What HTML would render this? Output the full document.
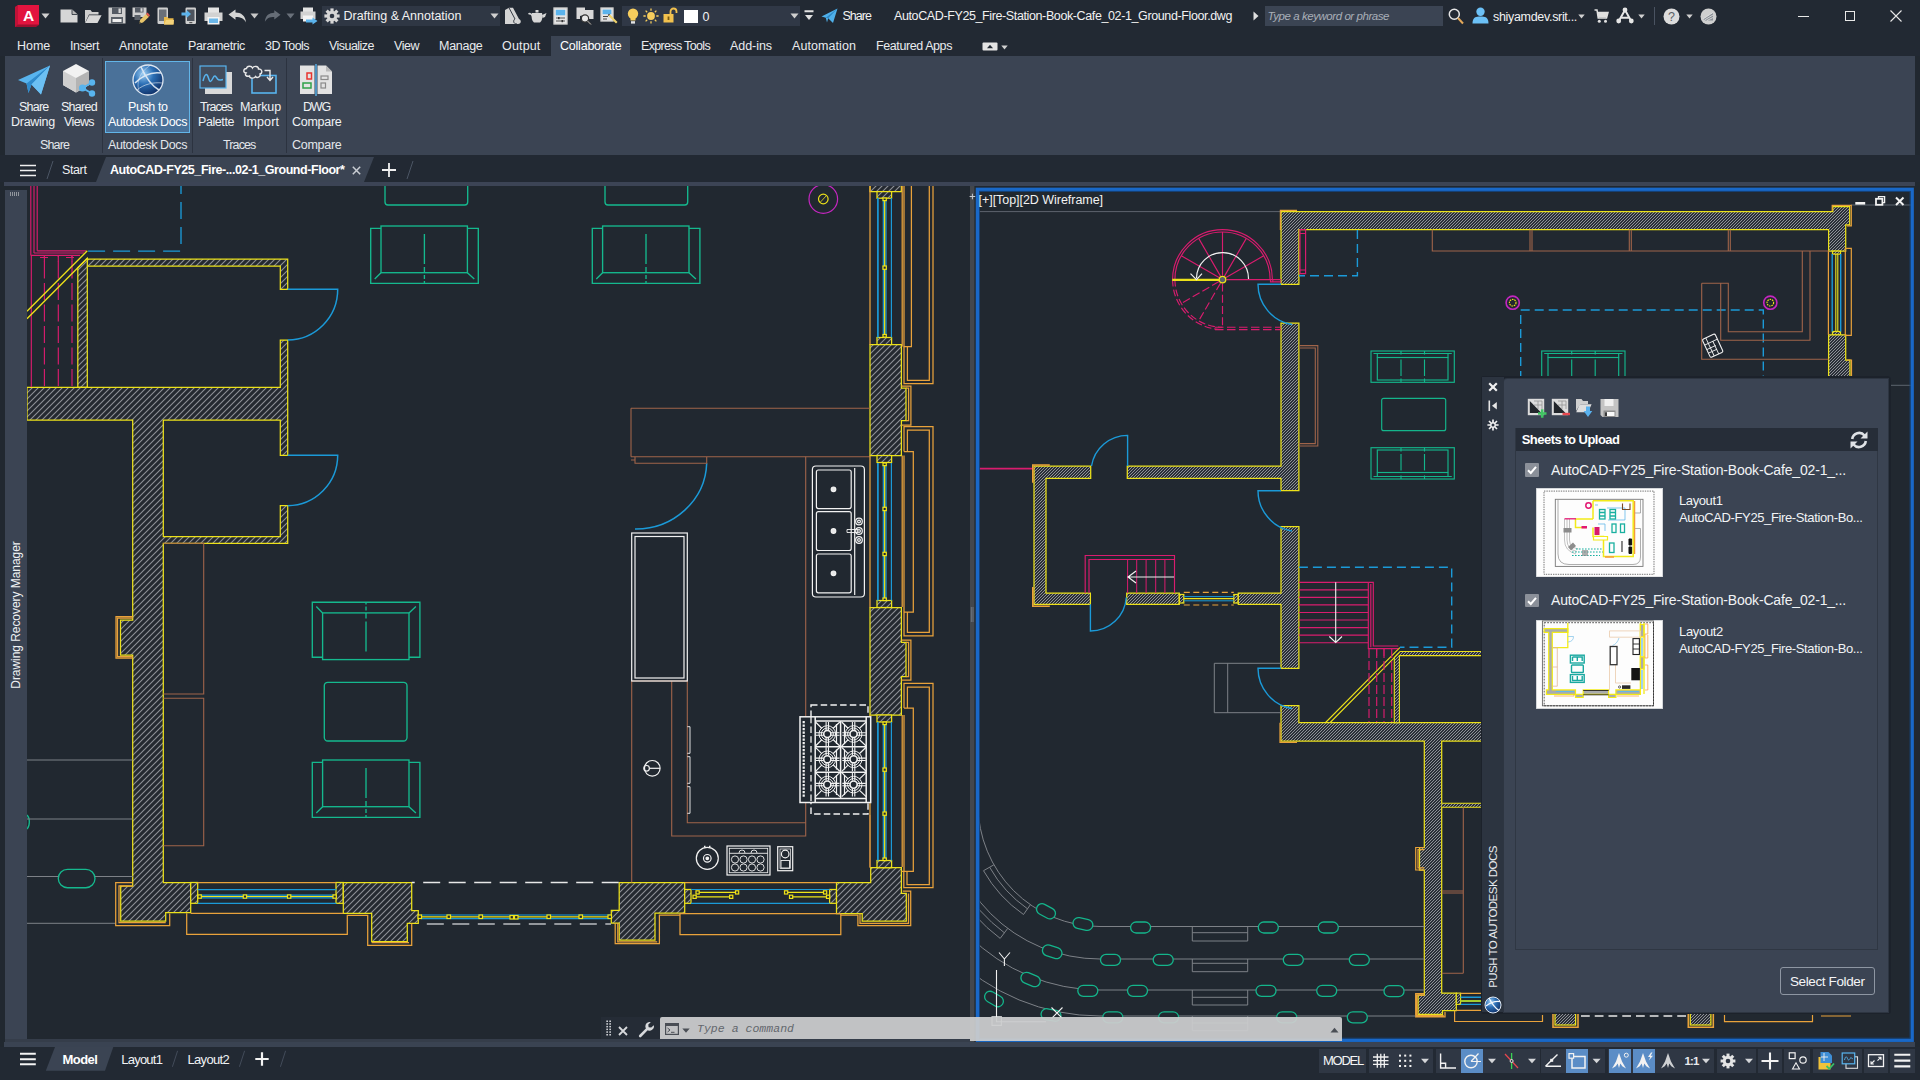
<!DOCTYPE html>
<html lang="en"><head><meta charset="utf-8"><title>AutoCAD - Push to Autodesk Docs</title>
<style>
*{box-sizing:border-box;margin:0;padding:0}
html,body{width:1920px;height:1080px;overflow:hidden;background:#212830;font-family:"Liberation Sans",sans-serif}
#app{position:relative;width:1920px;height:1080px;background:#212830;overflow:hidden}
.abs{position:absolute}
.t{position:absolute;white-space:pre;color:#fff}
svg{position:absolute;overflow:hidden}
.ico{position:absolute}
</style></head><body><div id="app">
<!-- ===== title bar ===== -->
<div class="abs" style="left:0;top:0;width:1920px;height:56px;background:#222933"></div>
<!-- A logo -->
<svg style="left:14px;top:4px" width="27" height="24" viewBox="0 0 27 24"><path d="M1 3 L4 1 L25 1 L25 21 L22 23 L1 23 Z" fill="#9c0f2f"/><rect x="4" y="1" width="21" height="19.5" fill="#e2143f"/><path d="M1 3 L4 1 L4 20.5 L1 23Z" fill="#c01237"/><text x="14.6" y="16.5" font-family="Liberation Sans, sans-serif" font-weight="700" font-size="15.5" fill="#fff" text-anchor="middle">A</text></svg>
<svg style="left:41px;top:13px" width="9" height="6"><path d="M0.5 0.5 L8.5 0.5 L4.5 5.5Z" fill="#d0d0d0"/></svg>
<!-- qat icons -->
<svg style="left:60px;top:9px" width="18" height="14" viewBox="0 0 18 14"><path d="M0.5 0.5 H12 L17.5 5.5 V13.5 H0.5Z" fill="#d6d6d6"/><path d="M12 0.5 V5.5 H17.5" fill="#b8b8b8" stroke="#222933" stroke-width="0.8"/></svg>
<svg style="left:84px;top:8px" width="18" height="16" viewBox="0 0 18 16"><path d="M1 15 V2 H6.5 L8 4 H14.5 V6.5 H5 L1 15Z" fill="#cfcfcf"/><path d="M5.2 7.2 H17.6 L13.5 15 H1.2Z" fill="#d8d8d8"/></svg>
<svg style="left:108px;top:7px" width="18" height="17" viewBox="0 0 18 17"><path d="M0.5 0.5 H17.5 V16.5 H0.5Z" fill="#d0d0d0"/><rect x="4" y="0.5" width="10" height="6.5" fill="#555b64"/><rect x="10.5" y="1.5" width="2.3" height="4.5" fill="#d8d8d8"/><rect x="3" y="10" width="12" height="6.5" fill="#5a6068"/><rect x="4.5" y="12" width="9" height="3" fill="#f0f0f0"/></svg>
<svg style="left:132px;top:7px" width="18" height="17" viewBox="0 0 18 17"><path d="M0.5 0.5 H14.5 V10 H0.5Z" fill="#cfcfcf"/><rect x="3" y="0.5" width="8.5" height="5" fill="#555b64"/><rect x="8.5" y="1.2" width="2" height="3.5" fill="#d8d8d8"/><rect x="2.5" y="8" width="6" height="5" fill="#5a6068"/><path d="M7 16.5 L8.2 12.8 L14 7 L17 9.8 L11 15.6Z" fill="#e8c56a"/><path d="M14 7 L15.5 5.6 L18 8.2 L17 9.8Z" fill="#e2574c"/><path d="M7 16.5 L7.6 14.6 L9 16Z" fill="#333"/></svg>
<svg style="left:157px;top:7px" width="17" height="18" viewBox="0 0 17 18"><rect x="0.5" y="0.5" width="10.5" height="16.5" rx="1.2" fill="#cfcfcf"/><rect x="2" y="2.5" width="7.5" height="11.5" fill="#6a7078"/><path d="M7 17.5 V10 H10.5 L11.5 11.3 H16.5 V17.5Z" fill="#e9b94a"/><path d="M7 17.5 L9 13 H17 L16.5 17.5Z" fill="#f3d27a"/></svg>
<svg style="left:181px;top:7px" width="16" height="18" viewBox="0 0 16 18"><rect x="4.5" y="0.5" width="10.5" height="16.5" rx="1.2" fill="#cfcfcf"/><rect x="6" y="2.5" width="7.5" height="11.5" fill="#4d545e"/><rect x="8.3" y="15" width="3" height="1.2" fill="#555"/><path d="M0.5 5.5 H5.5 V3 L10 7 L5.5 11 V8.5 H0.5Z" fill="#5bb3ec"/></svg>
<svg style="left:204px;top:7px" width="19" height="18" viewBox="0 0 19 18"><rect x="4" y="0.5" width="11" height="6" fill="#e4e4e4"/><path d="M0.5 5.5 H18.5 V14 H0.5Z" fill="#d2d2d2"/><rect x="3.5" y="10" width="12" height="7.5" fill="#f4f4f4"/><rect x="5" y="11.5" width="9" height="4.5" fill="#6cb8ea"/></svg>
<svg style="left:228px;top:9px" width="19" height="14" viewBox="0 0 19 14"><path d="M0.5 5.5 L7.5 0.5 V3.5 C13 3.5 17.5 6.5 18 13.5 C16 9.5 13 8 7.5 8 V10.8Z" fill="#d4d4d4"/></svg>
<svg style="left:250px;top:13px" width="9" height="6"><path d="M0.5 0.5 L8.5 0.5 L4.5 5.5Z" fill="#c8c8c8"/></svg>
<svg style="left:264px;top:9px" width="17" height="14" viewBox="0 0 19 14"><path d="M18.5 5.5 L11.5 0.5 V3.5 C6 3.5 1.5 6.5 1 13.5 C3 9.5 6 8 11.5 8 V10.8Z" fill="#666d77"/></svg>
<svg style="left:286px;top:13px" width="9" height="6"><path d="M0.5 0.5 L8.5 0.5 L4.5 5.5Z" fill="#6a717b"/></svg>
<svg style="left:300px;top:7px" width="18" height="18" viewBox="0 0 18 18"><rect x="3" y="0.5" width="10" height="5" fill="#e4e4e4"/><path d="M0.5 4.5 H15.5 V12 H0.5Z" fill="#d2d2d2"/><rect x="3" y="8.5" width="10" height="6" fill="#f4f4f4"/><path d="M6 12.5 H12.5 V10.5 L17.5 14 L12.5 17.5 V15.5 H6Z" fill="#5bb3ec"/></svg>
<!-- workspace box -->
<div class="abs" style="left:322px;top:6px;width:178px;height:20px;background:#2f3744"></div>
<svg style="left:324px;top:8px" width="16" height="16" viewBox="-8 -8 16 16"><g fill="#d6d6d6"><circle r="5.2"/><g id="gt"><rect x="-1.6" y="-7.6" width="3.2" height="15.2"/></g><use href="#gt" transform="rotate(45)"/><use href="#gt" transform="rotate(90)"/><use href="#gt" transform="rotate(135)"/></g><circle r="2.3" fill="#2f3744"/></svg>
<span class="t" style="left:343.5px;top:7px;font:normal 400 12.5px/18px 'Liberation Sans', sans-serif;color:#f2f2f2;letter-spacing:-0.007px;">Drafting &amp; Annotation</span>
<svg style="left:490px;top:13px" width="9" height="6"><path d="M0.5 0.5 L8.5 0.5 L4.5 5.5Z" fill="#d0d0d0"/></svg>
<!-- misc icons after workspace -->
<svg style="left:504px;top:7px" width="18" height="18" viewBox="0 0 18 18"><path d="M1 17 V3 L5 0.8 H9 L15 12 C17.5 13 17.5 17 14 17Z" fill="#d4d4d4"/><path d="M5 0.8 L11 12 C9 13 9 17 13 17" fill="none" stroke="#222933" stroke-width="0.9"/></svg>
<svg style="left:528px;top:9px" width="19" height="14" viewBox="0 0 19 14"><path d="M4 4 H14 C15 8 14 12 12 13.5 H6 C4 12 3 8 4 4Z" fill="#d6d6d6"/><path d="M0.5 5 C2 4 4 5.5 5 8" stroke="#d6d6d6" stroke-width="1.6" fill="none"/><path d="M14 6 L18.5 4 L17 8 L14.5 9Z" fill="#d6d6d6"/><rect x="7.5" y="1" width="3" height="2.5" fill="#d6d6d6"/></svg>
<svg style="left:553px;top:7px" width="15" height="18" viewBox="0 0 15 18"><rect x="0.8" y="0.8" width="13.4" height="16.4" fill="#e6e6e6" stroke="#bdbdbd"/><rect x="2.8" y="2.8" width="9.4" height="5.5" fill="#5bb3ec"/><path d="M3 11 H12 M3 14 H12" stroke="#555" stroke-width="1.2"/><rect x="5" y="10" width="1.6" height="2.2" fill="#333"/><rect x="8.5" y="13" width="1.6" height="2.2" fill="#333"/></svg>
<svg style="left:576px;top:7px" width="18" height="18" viewBox="0 0 18 18"><path d="M0.5 0.5 H9 V3 H17.5 V12 H11 L8 8 L4 9 V12 H0.5Z" fill="#d8d8d8"/><circle cx="9" cy="11.5" r="3.6" fill="#e8e8e8" stroke="#333" stroke-width="1.2"/><path d="M11.5 14 L15 17.5" stroke="#333" stroke-width="2"/><path d="M11.5 14 L15 17.5" stroke="#ddd" stroke-width="0.8"/></svg>
<svg style="left:600px;top:7px" width="18" height="18" viewBox="0 0 18 18"><rect x="0.8" y="0.8" width="12.4" height="13.4" fill="#e6e6e6" stroke="#bdbdbd"/><rect x="2.6" y="2.6" width="8.8" height="4.6" fill="#5bb3ec"/><path d="M3 9.5 H8 M3 12 H7" stroke="#444" stroke-width="1.2"/><path d="M8.5 9 L13 13.5 L16 16.5 L17.5 15 L14.5 12 L10 7.5Z" fill="#f0d36b"/><path d="M8.5 9 L10 7.5 L9 6.8 L7.8 8Z" fill="#444"/></svg>
<!-- layer box -->
<div class="abs" style="left:622px;top:6px;width:178px;height:20px;background:#303846"></div>
<svg style="left:627px;top:8px" width="12" height="17" viewBox="0 0 12 17"><circle cx="6" cy="5.8" r="5.2" fill="#f6cd5d"/><path d="M3.5 9 H8.5 V12.5 H3.5Z" fill="#f6cd5d"/><rect x="4" y="13.2" width="4" height="2.4" fill="#e4e4e4"/></svg>
<svg style="left:643px;top:8px" width="16" height="16" viewBox="-8 -8 16 16"><circle r="3.9" fill="#f6cd5d"/><g stroke="#f6cd5d" stroke-width="1.3"><path d="M0 -7.6 V-5.3 M0 7.6 V5.3 M-7.6 0 H-5.3 M7.6 0 H5.3 M-5.4 -5.4 L-3.8 -3.8 M5.4 5.4 L3.8 3.8 M-5.4 5.4 L-3.8 3.8 M5.4 -5.4 L3.8 -3.8"/></g></svg>
<svg style="left:663px;top:7px" width="15" height="17" viewBox="0 0 15 17"><path d="M7.5 7 V4.5 A3 3 0 0 1 13.5 4.5 V6" fill="none" stroke="#f2c14e" stroke-width="1.8"/><rect x="0.5" y="7" width="10" height="8.5" fill="#f2c14e"/><rect x="4.6" y="9.5" width="1.8" height="3.5" fill="#7a5a10"/></svg>
<div class="abs" style="left:684px;top:9.5px;width:14px;height:13.5px;background:#fff"></div>
<span class="t" style="left:702.5px;top:7.5px;font:normal 400 12.5px/18px 'Liberation Sans', sans-serif;color:#f2f2f2;">0</span>
<svg style="left:790px;top:13px" width="9" height="6"><path d="M0.5 0.5 L8.5 0.5 L4.5 5.5Z" fill="#d0d0d0"/></svg>
<svg style="left:804px;top:10px" width="10" height="11"><path d="M0.5 1 H9.5 M0.5 1.5 H9.5" stroke="#e0e0e0" stroke-width="1.6"/><path d="M1 5 L9 5 L5 10Z" fill="#e0e0e0"/></svg>
<svg style="left:821px;top:8px" width="17" height="16" viewBox="0 0 17 16"><path d="M0.5 8.5 L16.5 0.5 L12 15 L7.2 10.2 L6 14.5 L4.8 9.8Z" fill="#4fb0ea"/><path d="M4.8 9.8 L16.5 0.5 L7.2 10.2" fill="#2b86c5"/></svg>
<span class="t" style="left:842.5px;top:7px;font:normal 400 12.5px/18px 'Liberation Sans', sans-serif;color:#f2f2f2;letter-spacing:-0.972px;">Share</span>
<span class="t" style="left:894px;top:7px;font:normal 400 12.5px/18px 'Liberation Sans', sans-serif;color:#f2f2f2;letter-spacing:-0.384px;">AutoCAD-FY25_Fire-Station-Book-Cafe_02-1_Ground-Floor.dwg</span>
<svg style="left:1253px;top:11px" width="6" height="10"><path d="M0.5 0.5 L5.5 5 L0.5 9.5Z" fill="#e0e0e0"/></svg>
<div class="abs" style="left:1265px;top:6px;width:178px;height:20px;background:#3b4453"></div>
<span class="t" style="left:1267.5px;top:8px;font:italic 400 11.5px/16px 'Liberation Sans', sans-serif;color:#a9afb8;letter-spacing:-0.442px;">Type a keyword or phrase</span>
<svg style="left:1448px;top:8px" width="16" height="17" viewBox="0 0 16 17"><circle cx="6.3" cy="6.3" r="5" fill="none" stroke="#e6e6e6" stroke-width="1.5"/><path d="M10 10 L15 15.5" stroke="#e3a85a" stroke-width="2"/></svg>
<svg style="left:1472px;top:7px" width="17" height="17" viewBox="0 0 17 17"><circle cx="8.5" cy="4.8" r="4.2" fill="#6cc1f7"/><path d="M0.5 16.5 C0.5 10 4 9.5 8.5 9.5 S16.5 10 16.5 16.5Z" fill="#6cc1f7"/></svg>
<span class="t" style="left:1493px;top:7.5px;font:normal 400 12.5px/18px 'Liberation Sans', sans-serif;color:#f2f2f2;letter-spacing:-0.316px;">shiyamdev.srit...</span>
<svg style="left:1578px;top:14px" width="7" height="5"><path d="M0.3 0.5 L6.7 0.5 L3.5 4.5Z" fill="#d0d0d0"/></svg>
<svg style="left:1594px;top:9px" width="15" height="15" viewBox="0 0 15 15"><path d="M0.5 1 H3 L4.2 9 H12.5 L14 3.5 H3.6" fill="none" stroke="#e0e0e0" stroke-width="1.5"/><rect x="4" y="4" width="9" height="4.5" fill="#e0e0e0"/><circle cx="5.3" cy="12.3" r="1.5" fill="#e0e0e0"/><circle cx="11.5" cy="12.3" r="1.5" fill="#e0e0e0"/></svg>
<svg style="left:1616px;top:7px" width="18" height="17" viewBox="0 0 18 17"><path d="M9 3 L2.8 14 M9 3 L15.2 14 M5 10.8 H13" fill="none" stroke="#e6e6e6" stroke-width="2"/><circle cx="9" cy="3" r="2.4" fill="#e6e6e6"/><circle cx="2.7" cy="14" r="2.4" fill="#e6e6e6"/><circle cx="15.3" cy="14" r="2.4" fill="#e6e6e6"/></svg>
<svg style="left:1638px;top:14px" width="7" height="5"><path d="M0.3 0.5 L6.7 0.5 L3.5 4.5Z" fill="#d0d0d0"/></svg>
<div class="abs" style="left:1654px;top:7px;width:1px;height:18px;background:#4a5361"></div>
<svg style="left:1663px;top:8px" width="17" height="17" viewBox="0 0 17 17"><circle cx="8.5" cy="8.5" r="8" fill="#dcdcdc"/><text x="8.5" y="13" font-family="Liberation Sans, sans-serif" font-size="12.5" text-anchor="middle" fill="#5a5f66">?</text></svg>
<svg style="left:1686px;top:14px" width="7" height="5"><path d="M0.3 0.5 L6.7 0.5 L3.5 4.5Z" fill="#d0d0d0"/></svg>
<svg style="left:1700px;top:8px" width="17" height="17" viewBox="0 0 17 17"><circle cx="8.5" cy="8.5" r="8" fill="#cfcfcf"/><path d="M3 11 L13 4.5 V12.5 H5Z" fill="#8a8f96"/><path d="M3 11 L13 4.5 M4.5 12 L13 7 M7 12.5 L13 9.5" stroke="#e8e8e8" stroke-width="0.8"/></svg>
<!-- window controls -->
<div class="abs" style="left:1798px;top:15.5px;width:11px;height:1px;background:#e8e8e8"></div>
<div class="abs" style="left:1845px;top:11px;width:10px;height:10px;border:1px solid #e8e8e8"></div>
<svg style="left:1890px;top:10px" width="12" height="12"><path d="M0.5 0.5 L11.5 11.5 M11.5 0.5 L0.5 11.5" stroke="#e8e8e8" stroke-width="1.1"/></svg>

<!-- ===== menu tabs ===== -->
<div class="abs" style="left:551px;top:36px;width:79px;height:21px;background:#3b4453"></div>
<span class="t" style="left:17px;top:37px;font:normal 400 12.5px/18px 'Liberation Sans', sans-serif;color:#e9ebee;letter-spacing:-0.011px;">Home</span>
<span class="t" style="left:70px;top:37px;font:normal 400 12.5px/18px 'Liberation Sans', sans-serif;color:#e9ebee;letter-spacing:-0.378px;">Insert</span>
<span class="t" style="left:119px;top:37px;font:normal 400 12.5px/18px 'Liberation Sans', sans-serif;color:#e9ebee;letter-spacing:-0.131px;">Annotate</span>
<span class="t" style="left:188px;top:37px;font:normal 400 12.5px/18px 'Liberation Sans', sans-serif;color:#e9ebee;letter-spacing:-0.344px;">Parametric</span>
<span class="t" style="left:265px;top:37px;font:normal 400 12.5px/18px 'Liberation Sans', sans-serif;color:#e9ebee;letter-spacing:-0.553px;">3D Tools</span>
<span class="t" style="left:329px;top:37px;font:normal 400 12.5px/18px 'Liberation Sans', sans-serif;color:#e9ebee;letter-spacing:-0.535px;">Visualize</span>
<span class="t" style="left:394px;top:37px;font:normal 400 12.5px/18px 'Liberation Sans', sans-serif;color:#e9ebee;letter-spacing:-0.469px;">View</span>
<span class="t" style="left:439px;top:37px;font:normal 400 12.5px/18px 'Liberation Sans', sans-serif;color:#e9ebee;letter-spacing:-0.281px;">Manage</span>
<span class="t" style="left:502px;top:37px;font:normal 400 12.5px/18px 'Liberation Sans', sans-serif;color:#e9ebee;letter-spacing:0.161px;">Output</span>
<span class="t" style="left:560px;top:37px;font:normal 400 12.5px/18px 'Liberation Sans', sans-serif;color:#ffffff;letter-spacing:-0.222px;">Collaborate</span>
<span class="t" style="left:641px;top:37px;font:normal 400 12.5px/18px 'Liberation Sans', sans-serif;color:#e9ebee;letter-spacing:-0.661px;">Express Tools</span>
<span class="t" style="left:730px;top:37px;font:normal 400 12.5px/18px 'Liberation Sans', sans-serif;color:#e9ebee;letter-spacing:-0.056px;">Add-ins</span>
<span class="t" style="left:792px;top:37px;font:normal 400 12.5px/18px 'Liberation Sans', sans-serif;color:#e9ebee;letter-spacing:0.077px;">Automation</span>
<span class="t" style="left:876px;top:37px;font:normal 400 12.5px/18px 'Liberation Sans', sans-serif;color:#e9ebee;letter-spacing:-0.409px;">Featured Apps</span>
<svg style="left:982px;top:42px" width="16" height="9"><rect x="0.5" y="0.5" width="15" height="8" rx="1" fill="#e4e4e4"/><path d="M5 6.3 L8 2.8 L11 6.3Z" fill="#222933"/></svg>
<svg style="left:1001px;top:45px" width="7" height="5"><path d="M0.3 0.5 L6.7 0.5 L3.5 4.5Z" fill="#d0d0d0"/></svg>

<!-- ===== ribbon ===== -->
<div class="abs" style="left:5px;top:56px;width:1910px;height:99px;background:#3b4453"></div>
<div class="abs" style="left:102px;top:58px;width:1px;height:95px;background:#2c3340"></div>
<div class="abs" style="left:192px;top:58px;width:1px;height:95px;background:#2c3340"></div>
<div class="abs" style="left:286px;top:58px;width:1px;height:95px;background:#2c3340"></div>
<div class="abs" style="left:105px;top:61px;width:85px;height:72px;background:#4a7199;border:1px solid #62b5e8"></div>
<!-- share drawing -->
<svg style="left:17px;top:64px" width="34" height="32" viewBox="0 0 34 32"><path d="M1 16 L33 1.5 L24 30.5 L14.5 20.5 L11.5 29 L9.5 19.5Z" fill="#58b4ee"/><path d="M9.5 19.5 L33 1.5 L14.5 20.5 L11.5 29Z" fill="#2f8bcc"/><path d="M14.5 20.5 L33 1.5 L24 30.5Z" fill="#6cc0f3"/></svg>
<span class="t" style="left:19px;top:98px;font:normal 400 12.5px/18px 'Liberation Sans', sans-serif;color:#f0f2f4;letter-spacing:-0.772px;">Share</span>
<span class="t" style="left:11px;top:113px;font:normal 400 12.5px/18px 'Liberation Sans', sans-serif;color:#f0f2f4;letter-spacing:-0.266px;">Drawing</span>
<!-- shared views -->
<svg style="left:61px;top:63px" width="36" height="34" viewBox="0 0 36 34"><path d="M2 8 L15 1 L28 8 V22 L15 29.5 L2 22Z" fill="#f2f2f2"/><path d="M2 8 L15 15 V29.5 L2 22Z" fill="#cfcfcf"/><path d="M15 15 L28 8 V22 L15 29.5Z" fill="#b4b4b4"/><g stroke="#58b4ee" stroke-width="2"><path d="M21.5 25 L31 19.5 M21.5 25 L31 30.5"/></g><circle cx="21.5" cy="25" r="3.6" fill="#58b4ee"/><circle cx="31" cy="19.5" r="3.2" fill="#58b4ee"/><circle cx="31" cy="30.5" r="3.2" fill="#58b4ee"/></svg>
<span class="t" style="left:61px;top:98px;font:normal 400 12.5px/18px 'Liberation Sans', sans-serif;color:#f0f2f4;letter-spacing:-0.719px;">Shared</span>
<span class="t" style="left:64px;top:113px;font:normal 400 12.5px/18px 'Liberation Sans', sans-serif;color:#f0f2f4;letter-spacing:-0.625px;">Views</span>
<!-- push to autodesk docs -->
<svg style="left:132px;top:64px" width="32" height="32" viewBox="-16 -16 32 32"><defs><radialGradient id="gl" cx="35%" cy="30%" r="75%"><stop offset="0" stop-color="#9fd0f5"/><stop offset="0.45" stop-color="#2c6fb5"/><stop offset="1" stop-color="#0f2f66"/></radialGradient></defs><circle r="15" fill="url(#gl)" stroke="#dfe8f2" stroke-width="1.3"/><g fill="none" stroke="#e6eef7" stroke-width="1.6" opacity="0.9"><path d="M-13 3 C-4 -6 6 -8 13 -7"/><path d="M-7 -13 C-2 -2 4 6 11 10"/><path d="M-11 10 C-4 4 6 2 14 3" stroke-width="1" opacity="0.7"/><path d="M2 -14.5 C-8 -8 -12 2 -9 11" stroke-width="0.9" opacity="0.6"/></g></svg>
<span class="t" style="left:128px;top:98px;font:normal 400 12.5px/18px 'Liberation Sans', sans-serif;color:#ffffff;letter-spacing:-0.413px;">Push to</span>
<span class="t" style="left:108px;top:113px;font:normal 400 12.5px/18px 'Liberation Sans', sans-serif;color:#ffffff;letter-spacing:-0.391px;">Autodesk Docs</span>
<!-- traces palette -->
<svg style="left:199px;top:65px" width="34" height="30" viewBox="0 0 34 30"><rect x="6" y="7" width="27" height="22" fill="#d9d9d9"/><rect x="1" y="1" width="26" height="22" fill="#424d5d" stroke="#58b4ee" stroke-width="1.2"/><path d="M4 16 C6 8 8 8 9.5 13 S12 17 14 13 S17 12 18.5 14 S22 15 24 14.5" fill="none" stroke="#58b4ee" stroke-width="1.5"/></svg>
<span class="t" style="left:200px;top:98px;font:normal 400 12.5px/18px 'Liberation Sans', sans-serif;color:#f0f2f4;letter-spacing:-0.958px;">Traces</span>
<span class="t" style="left:198px;top:113px;font:normal 400 12.5px/18px 'Liberation Sans', sans-serif;color:#f0f2f4;letter-spacing:-0.417px;">Palette</span>
<!-- markup import -->
<svg style="left:243px;top:65px" width="34" height="30" viewBox="0 0 34 30"><rect x="9" y="10.5" width="24" height="17.5" fill="none" stroke="#58b4ee" stroke-width="1.6"/><path d="M3 8 C0 8 0 3.5 3.5 3.5 C4 0.5 8.5 0.5 9.5 3 C11 0.5 15.5 1 15.5 4 C19 3.5 20 8 17 9 C18 12 14 13.5 12.5 11.5 C11 14 6.5 13.5 6.5 11 C3.5 12 1.5 10 3 8Z" fill="#3b4453" stroke="#e9e9e9" stroke-width="1.4"/><path d="M21.5 5.5 H27 V15 M24 12 L27 15.5 L30 12" fill="none" stroke="#e9e9e9" stroke-width="1.4"/></svg>
<span class="t" style="left:240px;top:98px;font:normal 400 12.5px/18px 'Liberation Sans', sans-serif;color:#f0f2f4;letter-spacing:-0.115px;">Markup</span>
<span class="t" style="left:243px;top:113px;font:normal 400 12.5px/18px 'Liberation Sans', sans-serif;color:#f0f2f4;letter-spacing:0.094px;">Import</span>
<!-- dwg compare -->
<svg style="left:299px;top:64px" width="34" height="32" viewBox="0 0 34 32"><path d="M1 1.5 H15.5 V30 H1Z" fill="#e3e3e3"/><path d="M18.5 1.5 H27 L33 7.5 V30 H18.5Z" fill="#e3e3e3"/><path d="M27 1.5 V7.5 H33Z" fill="#b9b9b9"/><path d="M17 0 V32" stroke="#58b4ee" stroke-width="1.4"/><rect x="8" y="9" width="4.5" height="6" fill="none" stroke="#e8342f" stroke-width="1.5"/><rect x="4" y="19" width="8" height="5" fill="none" stroke="#2fa14a" stroke-width="1.5"/><rect x="22" y="12" width="7" height="3.5" fill="none" stroke="#8a8a8a" stroke-width="1.2"/><rect x="22" y="19" width="4.5" height="5" fill="none" stroke="#8a8a8a" stroke-width="1.2"/></svg>
<span class="t" style="left:303px;top:98px;font:normal 400 12.5px/18px 'Liberation Sans', sans-serif;color:#f0f2f4;letter-spacing:-1.188px;">DWG</span>
<span class="t" style="left:292px;top:113px;font:normal 400 12.5px/18px 'Liberation Sans', sans-serif;color:#f0f2f4;letter-spacing:-0.275px;">Compare</span>
<!-- panel titles -->
<span class="t" style="left:40px;top:136px;font:normal 400 12.5px/18px 'Liberation Sans', sans-serif;color:#e4e7eb;letter-spacing:-0.872px;">Share</span>
<span class="t" style="left:108px;top:136px;font:normal 400 12.5px/18px 'Liberation Sans', sans-serif;color:#e4e7eb;letter-spacing:-0.391px;">Autodesk Docs</span>
<span class="t" style="left:223px;top:136px;font:normal 400 12.5px/18px 'Liberation Sans', sans-serif;color:#e4e7eb;letter-spacing:-0.875px;">Traces</span>
<span class="t" style="left:292px;top:136px;font:normal 400 12.5px/18px 'Liberation Sans', sans-serif;color:#e4e7eb;letter-spacing:-0.275px;">Compare</span>

<!-- ===== file tabs ===== -->
<div class="abs" style="left:0;top:155px;width:1920px;height:27px;background:#222933"></div>
<div class="abs" style="left:4px;top:182px;width:1911px;height:4.1px;background:#3c4455"></div>
<svg style="left:96px;top:157px" width="280" height="25"><path d="M0 25 L10 0 H278 L268 25Z" fill="#3b4453"/></svg>
<svg style="left:20px;top:164px" width="16" height="13"><path d="M0 1.5 H16 M0 6.5 H16 M0 11.5 H16" stroke="#f0f0f0" stroke-width="1.7"/></svg>
<svg style="left:45px;top:160px" width="10" height="20"><path d="M8 1 L2 19" stroke="#4b5564" stroke-width="1"/></svg>
<span class="t" style="left:62px;top:161px;font:normal 400 12.5px/18px 'Liberation Sans', sans-serif;color:#eef0f2;letter-spacing:-0.381px;">Start</span>
<span class="t" style="left:110px;top:161px;font:normal 700 12.5px/18px 'Liberation Sans', sans-serif;color:#ffffff;letter-spacing:-0.434px;">AutoCAD-FY25_Fire-...02-1_Ground-Floor*</span>
<svg style="left:352px;top:166px" width="9" height="9"><path d="M0.8 0.8 L8.2 8.2 M8.2 0.8 L0.8 8.2" stroke="#c9cdd3" stroke-width="1.5"/></svg>
<svg style="left:382px;top:163px" width="14" height="14"><path d="M7 0 V14 M0 7 H14" stroke="#f0f0f0" stroke-width="1.8"/></svg>
<svg style="left:405px;top:160px" width="10" height="20"><path d="M8 1 L2 19" stroke="#4b5564" stroke-width="1"/></svg>

<!-- ===== left palette strip ===== -->
<div class="abs" style="left:5px;top:190px;width:22px;height:850px;background:#3b4453"></div>
<svg style="left:9px;top:192px" width="12" height="5"><g fill="#e8e8e8"><rect x="1" y="0.5" width="1" height="1"/><rect x="3" y="0.5" width="1" height="1"/><rect x="5" y="0.5" width="1" height="1"/><rect x="7" y="0.5" width="1" height="1"/><rect x="9" y="0.5" width="1" height="1"/><rect x="1" y="2.5" width="1" height="1"/><rect x="3" y="2.5" width="1" height="1"/><rect x="5" y="2.5" width="1" height="1"/><rect x="7" y="2.5" width="1" height="1"/><rect x="9" y="2.5" width="1" height="1"/></g></svg>
<div class="abs" style="left:16px;top:615px;width:0;height:0"><span id="drm" style="position:absolute;white-space:pre;font:400 12px/16px 'Liberation Sans',sans-serif;color:#f0f2f4;transform:translate(-50%,-50%) rotate(-90deg);letter-spacing:-0.055px">Drawing Recovery Manager</span></div>
<!-- ===== LEFT VIEWPORT ===== -->
<svg style="left:0;top:0" width="1920" height="1080" viewBox="0 0 1920 1080">
<defs>
<pattern id="hA" patternUnits="userSpaceOnUse" width="6" height="6"><rect width="6" height="6" fill="#242930"/><path d="M-1.5 1.5 L1.5 -1.5 M-0.5 6.5 L6.5 -0.5 M4.5 7.5 L7.5 4.5" stroke="#8d9096" stroke-width="1.1"/></pattern>
<pattern id="hB" patternUnits="userSpaceOnUse" width="3" height="3"><rect width="3" height="3" fill="#2a2f37"/><path d="M-1 1 L1 -1 M-0.5 3.5 L3.5 -0.5 M2 4 L4 2" stroke="#95989d" stroke-width="0.95"/></pattern>
<clipPath id="cl"><rect x="27" y="186.1" width="943" height="854"/></clipPath>
<g id="sofaL" fill="none" stroke="#15b98e" stroke-width="1.35"><path d="M10.3 2.3 H0 V57.3 H107.6 V2.3 H96.7"/><rect x="10.3" y="0" width="86.4" height="46.7"/><path d="M10.3 46.7 L4 53 M96.7 46.7 L103.6 53 M53.7 8 V38 M53.7 41 V46.7 M53.7 49 V53 M53.7 55 V57.3"/></g>
</defs>
<g clip-path="url(#cl)" fill="none" stroke-linecap="butt">
<!-- hatch fills -->
<g fill="url(#hA)" stroke="#ece11a" stroke-width="1.25" stroke-linejoin="miter">
<path d="M87.3 259 H287.7 V289.3 H280.3 V266 H87.3Z"/>
<path d="M77.8 267.8 L87.3 258.3 V387.3 H77.8Z" />
<path d="M280.3 340 H287.7 V455.3 H280.3 V420 H163.3 V536.7 H280.3 V505.7 H287.7 V543.3 H163.3 V882.5 H190.7 V912.7 H165.7 V921 H120.7 V886 H132.7 V655 H120.5 V620 H132.7 V420 H27 V387.3 H280.3Z"/>
<rect x="190.7" y="882.5" width="7" height="20.8"/>
<rect x="336" y="882.5" width="7.3" height="20.8"/>
<path d="M343.3 882.5 H411.7 V910.7 H418.3 V923.3 H407.3 V941.7 H371.7 V913.3 H343.3Z"/>
<path d="M619.2 882.5 H684.7 V913.2 H655 V940 H619.2 V923 H611.3 V910.3 H619.2Z"/>
<rect x="684.7" y="889.5" width="6.3" height="13.8"/>
<rect x="829.6" y="889.5" width="6.9" height="13.8"/>
<path d="M836.5 882.5 H870.7 V867.7 H901.4 V893.4 H906.3 V921.1 H862.2 V913.6 H836.5Z"/>
<path d="M870 185 H901.4 V191.6 H870Z"/>
<rect x="877" y="191.6" width="14.6" height="6.6"/><rect x="877" y="337.5" width="14.6" height="7.2"/>
<path d="M870 344.7 H901.4 V388.2 H906 V420.7 H901.4 V455.5 H870Z"/>
<rect x="877" y="455.5" width="14.6" height="7"/><rect x="877" y="600.5" width="14.6" height="7"/>
<path d="M870 607.5 H901.4 V642.4 H906 V676.7 H901.4 V715 H870Z"/>
<rect x="877" y="715" width="14.6" height="7"/><rect x="877" y="860.5" width="14.6" height="7.2"/>
</g>
<!-- diagonal wall & pink stair (top-left) -->
<g stroke="#d91c6e" stroke-width="1.15">
<path d="M30.8 185 V255.4 M34 185 V253 M37.2 185 V250.8 M37.2 250.8 H86 M34 253 H84 M30.8 255.4 H80" />
<path d="M31.3 255.4 V387 M44.4 255.4 V262 M58.3 255.4 V262 M72 255.4 V262 M40 257.5 h8 M66 257.5 h8" />
<path d="M44.4 255.4 V387 M58.3 255.4 V387 M72 255.4 V387" stroke-dasharray="17 4.5" stroke-dashoffset="-6"/>
</g>
<path d="M87.3 250.8 L27 311.3 M87.3 258.3 L27 318.8" stroke="#ece11a" stroke-width="1.35"/>
<path d="M181 186 V251.1 H87.5" stroke="#1b9ad8" stroke-width="1.35" stroke-dasharray="17 8" stroke-dashoffset="9"/>
<!-- doors -->
<g stroke="#1b9ad8" stroke-width="1.5">
<path d="M287.7 289.3 H337.7 A50.5 50.5 0 0 1 287.7 340"/>
<path d="M287.7 455.3 H337.7 A50.5 50.5 0 0 1 287.7 505.7"/>
<path d="M706.7 463.3 A71 68 0 0 1 635 529"/>
</g>
<!-- sofas -->
<use href="#sofaL" x="370.7" y="226"/>
<use href="#sofaL" x="592.3" y="226"/>
<g stroke="#15b98e" stroke-width="1.35">
<path d="M385 185 V202 Q385 205 388 205 H464.7 Q467.7 205 467.7 202 V185"/>
<path d="M605 185 V202 Q605 205 608 205 H684.7 Q687.7 205 687.7 202 V185"/>
<g transform="translate(312.3,659.6) scale(1,-1)"><use href="#sofaL"/></g>
<use href="#sofaL" x="312.3" y="760"/>
<rect x="324.3" y="682.3" width="82.7" height="58.7" rx="3.5"/>
<rect x="58.3" y="869.3" width="36.7" height="18.4" rx="9.2"/>
<path d="M27 815 A4.5 8 0 0 1 27 829"/>
</g>
<!-- gray lines left -->
<path d="M27 760 H132.7 M27 819 H132.7 M27 876.5 H58.3 M95 876.5 H132.7 M27 923.3 H115.7" stroke="#7d8187" stroke-width="1"/>
<!-- brown cabinetry -->
<g stroke="#a0644a" stroke-width="1.1">
<path d="M163.3 543.3 H203.7 V694 H163.3 M163.3 698.3 H203.7 V845.7 H163.3"/>
<path d="M631 408.3 H870 M631 408.3 V456.7 M631 456.7 H870 M635 456.7 V463.3 H706.7 V456.7 M631 460 H635"/>
<path d="M805.7 456.7 V836 H671.7 V681 M687.3 681 V822.7 H805.7 M631.7 681 V882.5 M631.7 681 H687.3"/>
<path d="M870 815 V867"/>
</g>
<!-- orange -->
<g stroke="#e9a23b" stroke-width="1.25">
<path d="M132.7 616.5 H116 V658 H132.7 M132.7 618 H117.5 V656.5 H132.7" />
<path d="M132.7 882.5 H115.7 V925.7 H169.7 V913.5 M132.7 885.8 H119 V922.5 H165.7"/>
<path d="M197.7 882.5 H336"/>
<path d="M190.7 913.3 H343.3 M186.7 913.3 V934.3 H347.3 V915.3 H367.7 V945.3 H411.7 V923.5 M371.7 942.5 H409"/>
<path d="M684.7 882.5 H836.5"/>
<path d="M615.2 923 V943.5 H659.4 V915.2 H680 M617.8 923 V941.8 H657.2 M680 913.6 V934.6 H840.8 V913.6 M680 913.6 H840.8 M840.8 915 H857.9 V925.5 H910.7 V891 H902.8 M860 913.6 V923.4 H908.5 V893.4"/>
<path d="M870 185 V344.7 M870 455.5 V607.5 M870 715 V867.7 M902.2 185 V346.5 M904 185 V346.5 H911.4 V185"/>
<path d="M929.3 185 V380.3 H907.4 V346.5 M933 185 V383.5 H904 V346.5"/>
<path d="M901.4 386 H910.9 V425 H901.4 M906 388.2 H908.6 V420.7 H906"/>
<path d="M904 451.6 V426.5 H933 V635.8 H904 V612 M907.4 451.6 V430 H929.3 V632.4 H907.4 V612 M904 451.6 H913.3 V612 H904 M904 455.5 V612 M902.2 455.5 V607"/>
<path d="M901.4 640 H910.9 V680 H901.4 M906 642.4 H908.6 V676.7 H906"/>
<path d="M904 708 V683.3 H933 V887.5 H903.8 V871.3 M907.4 708 V687 H929.3 V884.5 H907 V871.3 M904 708 H913.3 V871.3 H901.4 M904 715 V871 M902.2 715 V867"/>
</g>
<!-- windows right wall -->
<g stroke="#1b9ad8" stroke-width="1.2">
<path d="M877.9 198 V337.5 M877.9 463 V600.5 M877.9 722 V860.5" stroke-width="1.7"/>
<path d="M891.4 198 V337.5 M891.4 463 V600.5 M891.4 722 V860.5 M883.3 200 V336 M886 200 V336 M883.3 465 V599 M886 465 V599 M883.3 724 V859 M886 724 V859"/>
<path d="M197.7 889.7 H336.4 M197.7 903.4 H336.4 M200 895.1 H334 M200 897.9 H334 M691 889.5 H829.6 M691 903.3 H829.6"/>
<path d="M421 915 H610 M421 918.6 H610"/>
</g>
<g stroke="#f0e418" stroke-width="1.2">
<path d="M884.65 198 V337.5 M884.65 463 V600.5 M884.65 722 V860.5"/>
<path d="M197.7 896.5 H336.4 M697 892.4 H737.5 M694 896.8 H731.6 M786 892.4 H825.6 M791 896.8 H829 M421 916.8 H610"/>
<g fill="#212830"><rect x="883" y="266" width="3.3" height="3.3"/><rect x="883" y="507.3" width="3.3" height="3.3"/><rect x="883" y="552.3" width="3.3" height="3.3"/><rect x="883" y="768" width="3.3" height="3.3"/><rect x="883" y="812" width="3.3" height="3.3"/>
<rect x="883" y="198" width="3.3" height="2.6"/><rect x="883" y="334.5" width="3.3" height="2.6"/><rect x="883" y="463" width="3.3" height="2.6"/><rect x="883" y="598" width="3.3" height="2.6"/><rect x="883" y="722" width="3.3" height="2.6"/><rect x="883" y="858" width="3.3" height="2.6"/>
<rect x="243.3" y="894.9" width="3.3" height="3.3"/><rect x="287.5" y="894.9" width="3.3" height="3.3"/><rect x="198" y="894.9" width="3.3" height="3.3"/><rect x="333" y="894.9" width="3.3" height="3.3"/>
<rect x="447" y="915" width="3.5" height="3.5"/><rect x="479" y="915" width="3.5" height="3.5"/><rect x="510" y="915.5" width="3.5" height="3.5"/><rect x="514.5" y="915.5" width="3.5" height="3.5"/><rect x="547" y="915" width="3.5" height="3.5"/><rect x="579" y="915" width="3.5" height="3.5"/><rect x="418" y="915" width="3.5" height="3.5"/><rect x="608" y="915" width="3.5" height="3.5"/>
<rect x="696" y="890.8" width="3.2" height="3.2"/><rect x="735.5" y="890.8" width="3.2" height="3.2"/><rect x="693" y="895.2" width="3.2" height="3.2"/><rect x="729.6" y="895.2" width="3.2" height="3.2"/><rect x="784.5" y="890.8" width="3.2" height="3.2"/><rect x="823.5" y="890.8" width="3.2" height="3.2"/><rect x="789.5" y="895.2" width="3.2" height="3.2"/><rect x="826.5" y="895.2" width="3.2" height="3.2"/></g>
</g>
<!-- yellow bottom wall line + dashes -->

<path d="M411.7 882.5 H619.3" stroke="#e8e8e8" stroke-width="1.3" stroke-dasharray="17 8.5" stroke-dashoffset="14"/>
<path d="M418.3 924 H611" stroke="#b9bcc0" stroke-width="1.6" stroke-dasharray="17 8.5" stroke-dashoffset="17"/>
<!-- magenta marker -->
<circle cx="823.3" cy="199" r="14.3" stroke="#c526c1" stroke-width="1.2"/><circle cx="823.3" cy="199" r="4.8" stroke="#ece11a" stroke-width="1.2"/><path d="M820.5 202 L826 196" stroke="#ece11a" stroke-width="0.8"/>
<!-- white appliances -->
<g stroke="#f2f2f2" stroke-width="1.2">
<rect x="631.7" y="533" width="55.6" height="148"/><rect x="635" y="536.5" width="49" height="141.5"/>
<rect x="812.4" y="466" width="52" height="131" rx="3.5"/>
<rect x="816.4" y="470" width="34.8" height="38.6" rx="2"/><rect x="816.4" y="511.7" width="34.8" height="38.8" rx="2"/><rect x="816.4" y="554" width="34.8" height="38.8" rx="2"/>
<path d="M854.7 468 V595"/>
<circle cx="833.5" cy="489.3" r="2.3" fill="#e8e8e8"/><circle cx="833.5" cy="531" r="2.3" fill="#e8e8e8"/><circle cx="833.5" cy="573.3" r="2.3" fill="#e8e8e8"/>
<circle cx="859" cy="521.5" r="3.3"/><circle cx="859" cy="531" r="3.3"/><circle cx="859" cy="540" r="3.3"/><circle cx="859" cy="521.5" r="1.4"/><circle cx="859" cy="531" r="1.4"/><circle cx="859" cy="540" r="1.4"/><path d="M847 529.5 H858 M847 532.5 H858 M847 529.5 V532.5" stroke-width="0.9"/>
<path d="M687.3 726.7 H690 V753.3 H687.3 M687.3 756.7 H690 V783.3 H687.3 M687.3 786.7 H690 V813.3 H687.3" stroke-width="0.9"/>
<circle cx="652.3" cy="768.3" r="7.8"/><circle cx="646.6" cy="768.3" r="2.8"/><path d="M649.5 768.3 H660"/>
<rect x="811" y="705" width="57" height="109" stroke-dasharray="6.5 3.2" stroke-width="1.4"/>
<rect x="800" y="716.8" width="70.7" height="85.7" fill="#212830" stroke-width="1.5"/>
<path d="M811 716.8 V802.5" stroke-dasharray="6.5 3.2" stroke-width="1.3"/>
<path d="M815.2 716.8 V802.5 M866.2 716.8 V802.5 M815.2 721 H866.2 M815.2 798.5 H866.2 M840.6 721 V798.5 M815.2 746.8 H866.2 M815.2 772.2 H866.2" stroke-width="1.5"/>
<path d="M803.7 721 V798" stroke-dasharray="2.2 1.3" stroke-width="2.2"/>
<g id="brn" stroke-width="1.3"><circle cx="827.3" cy="734" r="8.3" stroke-width="1"/><circle cx="827.3" cy="734" r="6" stroke-width="1"/><circle cx="827.3" cy="734" r="3.6" stroke-width="1.6"/><path d="M815.5 722 L822 728.5 M839.8 722 L833 728.5 M815.5 746 L822 739.5 M839.8 746 L833 739.5" stroke-width="1.2"/><path d="M816 732.8 H823.5 M816 735.2 H823.5 M831 732.8 H839.5 M831 735.2 H839.5 M826.1 722 V730 M828.5 722 V730 M826.1 738 V746 M828.5 738 V746" stroke-width="1.1"/></g>
<use href="#brn" x="26.3" y="0"/><use href="#brn" x="0" y="25.3"/><use href="#brn" x="26.3" y="25.3"/><use href="#brn" x="0" y="50.6"/><use href="#brn" x="26.3" y="50.6"/>
<path d="M836.5 724 V744 M844.5 724 V744 M836.5 749.5 V769.5 M844.5 749.5 V769.5 M836.5 775 V795 M844.5 775 V795" stroke-width="1.2"/>
<circle cx="707.3" cy="858.3" r="11"/><circle cx="707.3" cy="858.3" r="3.8"/><circle cx="707.3" cy="858.3" r="1.3" fill="#f2f2f2"/><path d="M704 846.5 h1.5 M709 846.5 h1.5" stroke-width="1.6"/>
<rect x="727" y="846" width="43" height="29"/><rect x="729.3" y="848.3" width="38.4" height="24.4" stroke-width="0.8"/>
<g stroke-width="0.9"><circle cx="735" cy="859.5" r="3.6"/><circle cx="743.5" cy="859.5" r="3.6"/><circle cx="752" cy="859.5" r="3.6"/><circle cx="760.5" cy="859.5" r="3.6"/><circle cx="735" cy="867.5" r="3.6"/><circle cx="743.5" cy="867.5" r="3.6"/><circle cx="752" cy="867.5" r="3.6"/><circle cx="760.5" cy="867.5" r="3.6"/><path d="M729.3 853.3 H767.7 M739 853 a3 3 0 0 1 6 0 M751 853 a3 3 0 0 1 6 0"/></g>
<rect x="777.7" y="846.7" width="15" height="24"/><circle cx="785.2" cy="854" r="3.8"/><rect x="781" y="860.5" width="8.5" height="7.5" stroke-width="0.9"/><rect x="780" y="849" width="10.4" height="19.6" stroke-width="0.7"/>
</g>
</g>
<!-- viewport separator -->
<rect x="970" y="186" width="4.4" height="856" fill="#43474d"/>
<path d="M971.3 607 V622 M973 607 V622" stroke="#7a828e" stroke-width="0.8"/>
</svg>
<!-- ===== RIGHT VIEWPORT ===== -->
<svg style="left:0;top:0" width="1920" height="1080" viewBox="0 0 1920 1080">
<defs><clipPath id="cr"><rect x="979" y="190.5" width="932" height="848"/></clipPath>
<g id="sofaR" fill="none" stroke="#14b58b" stroke-width="1.15"><rect x="0" y="0" width="83.3" height="31.3"/><rect x="6.3" y="6.5" width="70.7" height="22.5"/><path d="M2.5 2.5 H80.8 M6.3 2.5 V6.5 M77 2.5 V6.5 M30 0 V3.5 M30 8.5 V25 M30 27.5 V31.3 M53.5 0 V3.5 M53.5 8.5 V25 M53.5 27.5 V31.3"/></g>
</defs>
<g clip-path="url(#cr)" fill="none">
<path d="M979 211.6 H1281 M1851 205 H1911 M1890 385.3 H1911" stroke="#5d646e" stroke-width="1"/>
<g fill="url(#hB)" stroke="#ece11a" stroke-width="1.25">
<path d="M1281 211.5 H1832.8 V206.5 H1849.7 V224.8 H1845.7 V251.1 H1828.6 V229.6 H1298.9 V284.3 H1281Z"/>
<rect x="1832.5" y="251.1" width="8" height="3"/><rect x="1832.5" y="331.5" width="8" height="3.3"/>
<path d="M1828.6 334.8 H1845.7 V360 H1850 V380 H1828.6Z"/>
<path d="M1281 323.2 H1298.9 V490.7 H1281 V478.3 H1127.3 V466 H1281Z"/>
<path d="M1034 466 H1090.7 V478.3 H1046 V593 H1090.4 V604.3 H1034Z"/>
<path d="M1126.7 593 H1179.3 V604.3 H1126.7Z"/><rect x="1179.3" y="594.5" width="4.5" height="8.5"/><rect x="1233.8" y="594.5" width="4.5" height="8.5"/>
<path d="M1281 526.7 H1298.9 V668.3 H1281 V604.3 H1238.3 V593 H1281Z"/>
<path d="M1281 705.7 H1298.9 V722.7 H1482 V741 H1441.7 V993.1 H1456.3 V1010.6 H1442.5 V1014.4 H1418.1 V995 H1424.3 V870 H1419.5 V847.5 H1424.3 V741 H1281Z"/>
<rect x="1555" y="1010" width="20.6" height="15"/><rect x="1690.3" y="1010" width="20.6" height="15"/>
</g>
<g stroke="#ece11a" stroke-width="1.1">
<path d="M1399.8 647.6 L1325.6 722.5 M1399.8 652.2 L1330.2 722.5"/>
<path d="M1399.4 651.5 H1482 V655.6 H1399.4 V722.7 H1394.3 V657.5 L1399.4 652.3" fill="url(#hB)"/>
<rect x="1441.7" y="803.3" width="41" height="4" fill="url(#hB)" stroke="none"/><path d="M1441.7 803.3 H1482 M1441.7 807.3 H1482"/>
<rect x="1456.3" y="993.1" width="4.3" height="11.3" fill="url(#hB)"/>
<path d="M1835.8 254 V331.5 M1837.8 254 V331.5"/>
<path d="M1183.8 598.6 H1233.8"/>
</g>
<g stroke="#d91c6e" stroke-width="1.15">
<path d="M1172.6 279.6 A49.9 49.9 0 0 1 1272.4 279.6 M1174.9 279.6 A47.6 47.6 0 0 1 1270.1 279.6"/>
<path d="M1226.0 277.6 L1263.7 255.8 M1224.5 276.1 L1246.3 238.4 M1222.5 275.6 L1222.5 232.0 M1220.5 276.1 L1198.7 238.4 M1219.0 277.6 L1181.3 255.8 "/>
<path d="M1226.5 279.6 H1281 M1270.5 279.6 V281.90000000000003 H1281 M1272.8 279.6 V281.90000000000003"/>
<path d="M1172.6 279.6 A49.9 49.9 0 0 0 1222.5 329.5 M1174.9 279.6 A47.6 47.6 0 0 0 1222.5 327.20000000000005" stroke-dasharray="7 3"/>
<path d="M1219.0 281.6 L1181.3 303.4 M1220.5 283.1 L1198.7 320.8 M1222.5 283.6 L1222.5 327.2 " stroke-dasharray="8 3.2"/>
<path d="M1215 327.2 H1281 M1215 329.6 H1281" stroke-dasharray="8.5 3.5"/>
<path d="M1300 229.6 H1305.6 V273.6 H1300Z M1300 233.5 H1305.6 M1300 270 H1305.6"/>
<path d="M979 468.6 H1034" stroke-width="1.8"/>
<path d="M1085.2 593 V555.5 H1174.5 V593 M1089 593 V559.5 H1174.5"/>
<path d="M1127.6 559.5 V593 M1136.7 559.5 V593 M1146.1 559.5 V593 M1155.7 559.5 V593 M1164.9 559.5 V593" stroke-width="1"/>
<path d="M1298.9 582.3 H1368.3 M1298.9 589.8 H1368.3 M1298.9 597.4 H1368.3 M1298.9 604.9 H1368.3 M1298.9 612.5 H1368.3 M1298.9 620.0 H1368.3 M1298.9 627.6 H1368.3 M1298.9 635.1 H1368.3 M1298.9 642.7 H1368.3 "/>
<path d="M1368.3 582.3 H1373.3 V646 H1398.3 M1368.3 582.3 V648.6 H1398.3 M1370.8 584 V647.3"/>
<path d="M1369 649 V722 M1376.7 649 V722 M1384 649 V722 M1391.7 649 V722" stroke-dasharray="9 3"/>
<path d="M1376.7 649 V656 M1384 649 V656" stroke-width="0.8"/>
</g>
<path d="M1172.2 279.90000000000003 H1222.5" stroke="#ece11a" stroke-width="2.2"/>
<circle cx="1222.5" cy="279.6" r="3.3" fill="#59606a" stroke="#ece11a" stroke-width="1.3"/>
<path d="M1248.5 279.1 A26 26 0 0 0 1196.5 278.1 M1190.5 273.6 L1196.5 279.6 L1202.0 273.6" stroke="#f0f0f0" stroke-width="1.2"/>
<path d="M1174 577 H1128 M1136 571 L1128 577 L1136 583" stroke="#f0f0f0" stroke-width="1.2"/>
<path d="M1335.7 582.3 V642.5 M1329.3 636.5 L1335.7 642.5 L1342 636.5" stroke="#f0f0f0" stroke-width="1.1"/>
<g stroke="#1b9ad8" stroke-width="1.4">
<path d="M1281 284.3 H1258 A40.9 40.9 0 0 0 1292 324.5"/>
<path d="M1281 490.7 H1258 A40.9 40.9 0 0 0 1292 531"/>
<path d="M1281 668.3 H1258 A40.9 40.9 0 0 0 1292 708.5"/>
<path d="M1127.6 466 V435.4 A36.6 36.6 0 0 0 1091.5 466"/>
<path d="M1090.4 604.3 V631 A36 36 0 0 0 1126.3 597.5"/>
<path d="M1299 275.7 H1357.4 V229.6" stroke-dasharray="9 5" stroke-dashoffset="3"/>
<path d="M1520.7 380 V310 H1763.3 V380" stroke-dasharray="9 5"/>
<path d="M1298.9 567.3 H1451.7 V647.3 H1400" stroke-dasharray="9 5"/>
<path d="M1183.8 596.6 H1233.8 M1183.8 600.8 H1233.8" stroke-width="1"/>
<path d="M1832.2 254 V331.5 M1840.7 254 V331.5"/>
<path d="M1460.6 997.3 H1482 M1460.6 1004.4 H1482"/>
</g>
<path d="M1460.6 1001 H1482" stroke="#a5cc2e" stroke-width="2"/>
<g stroke="#e9a23b" stroke-width="1.2">
<path d="M1280.4 230 V210.3 H1297"/>
<path d="M1832.2 211 V205.3 H1851.3 V225.8 H1847 M1845.3 248.3 H1851.3 V335.4 H1845.3Z M1828.4 251 V334.8 M1847 360 H1851.5 V380"/>
<path d="M1032.8 482.8 V465 H1049.8 M1032.8 587 V606.2 H1049.8" stroke-width="1.6"/>
<path d="M1183.8 592.4 H1233.8 M1183.8 605 H1233.8" stroke-dasharray="6 3.5"/>
<path d="M1280 722.7 V742.3 H1297"/>
<path d="M1424.3 847.5 H1415.7 V870 H1424.3 M1424.3 849.7 H1418 V867.8 H1424.3"/>
<path d="M1424.3 993.6 H1415.7 V1016.9 H1445 V1012 M1424.3 995.2 H1417 V1015.6 H1443.8 M1460.6 993.4 H1482 M1456.3 1010.3 H1482" stroke-width="1.3"/>
<path d="M1454.6 1010.6 V1021.5 H1542.5 V1015 M1724.5 1015 V1021.7 H1812.5 V1015 M1821 1016 H1851"/>
<path d="M1553 1012 V1027.3 H1578 V1014 M1688.3 1014 V1027.3 H1713.3 V1012" stroke-width="1.6"/>
</g>
<path d="M1581 1016 H1688.7" stroke="#e8e8e8" stroke-width="1.7" stroke-dasharray="8.75 5"/>
<g stroke="#a0644a" stroke-width="1.1">
<path d="M1432.3 229.6 V251 H1828.6 M1530 229.6 V251 M1532 229.6 V251 M1629.3 229.6 V251 M1631.3 229.6 V251 M1728.3 229.6 V251 M1730.3 229.6 V251"/>
<path d="M1701.7 283.3 H1728.3 V331.7 H1802.3 V251 M1720.7 283.3 V340.2 H1810 V251 M1701.7 283.3 V359.3 H1828.6"/>
<path d="M1298.9 345.6 H1317.8 V446 H1298.9 M1298.9 348 H1315.3 V443.6 H1298.9"/>
<path d="M1463.3 807.3 V973.3 M1441.7 891 H1463.3 M1441.7 973.3 H1463.3 M1441.7 893 H1463.3"/>
</g>
<path d="M1281 663.3 H1214.3 V712.7 H1281 M1227.7 663.3 V712.7" stroke="#7d8187" stroke-width="1"/>
<circle cx="1512.7" cy="302.7" r="6.6" stroke="#c526c1" stroke-width="1.6"/><circle cx="1512.7" cy="302.7" r="3.3" stroke="#ece11a" stroke-width="1.1" stroke-dasharray="1.6 0.8"/>
<circle cx="1770.3" cy="302.7" r="6.6" stroke="#c526c1" stroke-width="1.6"/><circle cx="1770.3" cy="302.7" r="3.3" stroke="#ece11a" stroke-width="1.1" stroke-dasharray="1.6 0.8"/>
<use href="#sofaR" x="1371" y="351"/><g transform="translate(1371,479) scale(1,-1)"><use href="#sofaR"/></g><use href="#sofaR" x="1541.7" y="351"/>
<rect x="1381.7" y="398.3" width="64" height="32.4" rx="2" stroke="#14b58b" stroke-width="1.15"/>
<g transform="translate(1712.7,345.7) rotate(-25)" stroke="#f2f2f2" stroke-width="1.1"><rect x="-7" y="-10" width="14" height="20" rx="1.5" fill="#212830"/><path d="M-7 -4 H7 M-7 1 H3 M-3 -10 V10 M2 -4 V10 M-7 5 H2" stroke-width="0.9"/></g>
<g stroke="#7d8187" stroke-width="1">
<path d="M978.0 190 V804.5 A122 122 0 0 0 1100.0 926.5 H1424.3"/>
<path d="M945.5 190 V804.5 A154.5 154.5 0 0 0 1100.0 959.0 H1424.3"/>
<path d="M914.5 190 V804.5 A185.5 185.5 0 0 0 1100.0 990.0 H1424.3"/>
<path d="M888.5 190 V804.5 A211.5 211.5 0 0 0 1100.0 1016.0 H1415.5"/>
<path d="M989.6 867.2 A127 127 0 0 0 1027.5 908.8 M983.5 870.7 A134 134 0 0 0 1023.5 914.5 M993.9 864.8 L983.5 870.7 M1030.4 904.7 L1023.5 914.5 "/>
<path d="M961.4 884.5 A160 160 0 0 0 1004.4 932.8 M955.4 888.0 A167 167 0 0 0 1000.2 938.4 M966.2 881.8 L955.4 888.0 M1007.7 928.4 L1000.2 938.4 "/>
<path d="M932.2 893.7 A190 190 0 0 0 948.3 918.8 M926.9 896.5 A196 196 0 0 0 943.5 922.5 M936.2 891.6 L926.9 896.5 M951.9 916.1 L943.5 922.5 "/>
<path d="M1192.3 926.5 V941 H1247.7 V926.5 M1192.3 932.7 H1247.7"/>
<path d="M1192.3 959 V971.7 H1247.7 V959 M1192.3 963.3 H1247.7"/>
<path d="M1192.3 990 V1005 H1247.7 V990 M1192.3 997.3 H1247.7"/>
<path d="M1192.3 1016 V1030.7 H1247.7 V1016 M1192.3 1023 H1247.7"/>
</g>
<g stroke="#14b58b" stroke-width="1.3" fill="#212830">
<rect x="-10" y="-5.5" width="20" height="11" rx="5.5" transform="translate(1046,911.3) rotate(28)"/>
<rect x="-10" y="-5.5" width="20" height="11" rx="5.5" transform="translate(1082.9,924) rotate(12)"/>
<rect x="-10" y="-5.5" width="20" height="11" rx="5.5" transform="translate(1140.6,927.5) rotate(0)"/>
<rect x="-10" y="-5.5" width="20" height="11" rx="5.5" transform="translate(1268.3,927.5) rotate(0)"/>
<rect x="-10" y="-5.5" width="20" height="11" rx="5.5" transform="translate(1328.3,927.5) rotate(0)"/>
<rect x="-10" y="-5.5" width="20" height="11" rx="5.5" transform="translate(1052.2,951.8) rotate(18)"/>
<rect x="-10" y="-5.5" width="20" height="11" rx="5.5" transform="translate(1110.5,959.9) rotate(0)"/>
<rect x="-10" y="-5.5" width="20" height="11" rx="5.5" transform="translate(1163.2,959.9) rotate(0)"/>
<rect x="-10" y="-5.5" width="20" height="11" rx="5.5" transform="translate(1293.3,959.9) rotate(0)"/>
<rect x="-10" y="-5.5" width="20" height="11" rx="5.5" transform="translate(1359.3,959.9) rotate(0)"/>
<rect x="-10" y="-5.5" width="20" height="11" rx="5.5" transform="translate(1030.6,979.5) rotate(22)"/>
<rect x="-10" y="-5.5" width="20" height="11" rx="5.5" transform="translate(1087.8,990.8) rotate(0)"/>
<rect x="-10" y="-5.5" width="20" height="11" rx="5.5" transform="translate(1137.5,990.8) rotate(0)"/>
<rect x="-10" y="-5.5" width="20" height="11" rx="5.5" transform="translate(1266,990.8) rotate(0)"/>
<rect x="-10" y="-5.5" width="20" height="11" rx="5.5" transform="translate(1326.7,990.8) rotate(0)"/>
<rect x="-10" y="-5.5" width="20" height="11" rx="5.5" transform="translate(1394,991.2) rotate(0)"/>
<rect x="-10" y="-5.5" width="20" height="11" rx="5.5" transform="translate(994,999) rotate(30)"/>
<rect x="-10" y="-5.5" width="20" height="11" rx="5.5" transform="translate(1051,1015) rotate(10)"/>
<rect x="-10" y="-5.5" width="20" height="11" rx="5.5" transform="translate(1112.8,1017.3) rotate(0)"/>
<rect x="-10" y="-5.5" width="20" height="11" rx="5.5" transform="translate(1168.6,1017.3) rotate(0)"/>
<rect x="-10" y="-5.5" width="20" height="11" rx="5.5" transform="translate(1286.7,1017.3) rotate(0)"/>
<rect x="-10" y="-5.5" width="20" height="11" rx="5.5" transform="translate(1357.3,1017.3) rotate(0)"/>
</g>
<g stroke="#f0f0f0" stroke-width="1.1"><path d="M996.5 970 V1021.7 H1046 M992 1016.8 H1001.4 V1025.4 H992Z M999 952.5 L1004.4 959 L1010 952.5 M1004.4 959 V966 M1051.5 1007.5 L1062.5 1018.5 M1062.5 1007.5 L1051.5 1018.5"/></g>
</g>
<rect x="977.4" y="189.3" width="934.8" height="851" fill="none" stroke="#1968c8" stroke-width="3.3"/>
<rect x="979.5" y="191.4" width="930.6" height="846.8" fill="none" stroke="#15457f" stroke-width="0.9"/>
<path d="M1855.3 203.3 H1865.2" stroke="#f2f2f2" stroke-width="2.6"/><rect x="1876" y="198.8" width="6.4" height="6" fill="none" stroke="#f2f2f2" stroke-width="1.8"/><path d="M1878.5 198 V196.6 H1884.6 V202.6 H1883" fill="none" stroke="#f2f2f2" stroke-width="1.3"/><path d="M1896 197.5 L1903.5 205 M1903.5 197.5 L1896 205" stroke="#f2f2f2" stroke-width="2"/>
<path d="M972.4 193.7 V199.3 M969.6 196.5 H975.2" stroke="#c9ccd0" stroke-width="1"/>
</svg>
<span class="t" style="left:978.5px;top:191px;font:normal 400 12.5px/18px 'Liberation Sans', sans-serif;color:#f2f2f2;letter-spacing:-0.040px;">[+][Top][2D Wireframe]</span>
<!-- ===== PUSH TO AUTODESK DOCS palette ===== -->
<div class="abs" style="left:1481px;top:376px;width:410px;height:638px;background:#1c222b;border-radius:3px 4px 3px 3px"></div>
<div class="abs" style="left:1482px;top:377px;width:22px;height:635px;background:#2c3440"></div>
<div class="abs" style="left:1503.5px;top:379px;width:384px;height:633px;background:#3b4453;border-top-left-radius:3px;box-shadow:0 0 0 1px #2d3541"></div>
<!-- strip icons -->
<svg style="left:1488px;top:382px" width="10" height="10"><path d="M1.2 1.2 L8.8 8.8 M8.8 1.2 L1.2 8.8" stroke="#f0f0f0" stroke-width="2.2"/></svg>
<svg style="left:1488px;top:400px" width="10" height="12"><path d="M1.3 0.5 V11" stroke="#e6e6e6" stroke-width="1.6"/><path d="M8.8 2 V9.5 L4 5.7Z" fill="#e6e6e6"/></svg>
<svg style="left:1487px;top:419px" width="12" height="12" viewBox="-6 -6 12 12"><g stroke="#f0f0f0" stroke-width="1.7"><path d="M0 -5.6 V5.6 M-5.6 0 H5.6 M-4 -4 L4 4 M4 -4 L-4 4"/></g><circle r="2.8" fill="#f0f0f0"/><circle r="1.5" fill="#2c3440"/></svg>
<div class="abs" style="left:1492.9px;top:916.9px;width:0;height:0"><span style="position:absolute;white-space:pre;font:400 11.5px/16px 'Liberation Sans',sans-serif;color:#e8ebef;transform:translate(-50%,-50%) rotate(-90deg);letter-spacing:-0.53px">PUSH TO AUTODESK DOCS</span></div>
<svg style="left:1483.9px;top:996px" width="18" height="18" viewBox="-9 -9 18 18"><circle r="8" fill="url(#gl)" stroke="#dfe8f2" stroke-width="1"/><g fill="none" stroke="#f4f8fc" stroke-width="1.3"><path d="M-7 1 C-2 -3 3 -4 7 -3.5"/><path d="M-4 -7 C-1 -1 2 3 6 5.5"/></g></svg>
<!-- toolbar icons -->
<svg style="left:1527px;top:398px" width="20" height="20" viewBox="0 0 20 20"><rect x="0.8" y="0.8" width="16.4" height="16.4" fill="#dcdcdc"/><path d="M7 3 H15 V11 M11 3 V11 M7 7 H15" stroke="#9a9a9a" stroke-width="0.9" fill="none"/><path d="M2.8 3 L14.5 15 H2.8Z" fill="#22262b"/><path d="M11 15.5 H19.5 M15.2 11.3 V19.8" stroke="#41c463" stroke-width="2.6"/></svg>
<svg style="left:1551.3px;top:398px" width="20" height="20" viewBox="0 0 20 20"><rect x="0.8" y="0.8" width="16.4" height="16.4" fill="#dcdcdc"/><path d="M7 3 H15 V11 M11 3 V11 M7 7 H15" stroke="#9a9a9a" stroke-width="0.9" fill="none"/><path d="M2.8 3 L14.5 15 H2.8Z" fill="#22262b"/><path d="M11.5 16 H19" stroke="#e8474f" stroke-width="2.4"/></svg>
<svg style="left:1575px;top:398px" width="18" height="20" viewBox="0 0 18 20"><path d="M1 13 V1 H6.5 L8 3 H13 V6 H5.5Z" fill="#cfcfcf"/><path d="M4.8 6.3 H16.6 L13 14.2 H1.2Z" fill="#dedede"/><path d="M11 8.5 H15 V13 H17.3 L13 19 L8.7 13 H11Z" fill="#5ab2ee"/></svg>
<svg style="left:1599.5px;top:398px" width="19" height="20" viewBox="0 0 19 20"><path d="M0.5 1 H18.5 V19 H2.5 L0.5 17Z" fill="#c4c4c4"/><rect x="4.5" y="1" width="9" height="7" fill="#f0f0f0"/><rect x="3.5" y="12.5" width="12" height="6.5" fill="#8e8e8e"/><rect x="7" y="14" width="7.5" height="4" fill="#fafafa"/><rect x="5" y="14.5" width="2" height="3.5" fill="#3a3a3a"/></svg>
<!-- list box -->
<div class="abs" style="left:1515px;top:427.5px;width:363px;height:522px;border:1px solid #2f3743"></div>
<div class="abs" style="left:1515.5px;top:427.7px;width:362px;height:23px;background:#262d38"></div>
<span class="t" style="left:1521.7px;top:431px;font:normal 700 13px/18px 'Liberation Sans', sans-serif;color:#ffffff;letter-spacing:-0.524px;">Sheets to Upload</span>
<svg style="left:1849px;top:430px" width="20" height="20" viewBox="0 0 20 20"><g fill="none" stroke="#dfe2e6" stroke-width="2.6"><path d="M3.2 9 A7 7 0 0 1 15.5 5.5"/><path d="M16.8 11 A7 7 0 0 1 4.5 14.5"/></g><path d="M18.5 1.5 V8.5 H11.5Z" fill="#dfe2e6"/><path d="M1.5 18.5 V11.5 H8.5Z" fill="#dfe2e6"/></svg>
<!-- item 1 -->
<div class="abs" style="left:1525px;top:463px;width:13.5px;height:13.5px;background:#8b9099;border-radius:1px"></div>
<svg style="left:1525px;top:463px" width="14" height="14"><path d="M3 7.2 L5.8 10 L11 3.8" fill="none" stroke="#fff" stroke-width="2"/></svg>
<span class="t" style="left:1551px;top:459.5px;font:normal 400 14px/20px 'Liberation Sans', sans-serif;color:#f1f3f5;letter-spacing:-0.175px;">AutoCAD-FY25_Fire-Station-Book-Cafe_02-1_...</span>
<span class="t" style="left:1679px;top:492px;font:normal 400 13px/18px 'Liberation Sans', sans-serif;color:#f1f3f5;letter-spacing:-0.395px;">Layout1</span>
<span class="t" style="left:1679px;top:509px;font:normal 400 13px/18px 'Liberation Sans', sans-serif;color:#f1f3f5;letter-spacing:-0.373px;">AutoCAD-FY25_Fire-Station-Bo...</span>
<svg style="left:1536px;top:488.2px" width="127" height="89.3" viewBox="0 0 127 89.3"><rect width="127" height="89.3" fill="#fdfdfd"/><rect x="0.4" y="0.4" width="126.2" height="88.5" fill="none" stroke="#c9ccd0" stroke-width="0.8"/>
<rect x="8" y="3.1" width="110" height="83.2" fill="none" stroke="#1a1a1a" stroke-width="0.6" stroke-dasharray="1.4 1"/>
<rect x="19.3" y="11.3" width="87.7" height="67.1" fill="none" stroke="#777" stroke-width="0.9"/>
<path d="M22 11.8 V66 Q22 76.5 33 76.5 H97 Q104.5 76.5 104.5 69 V40.5 H98.5 M98.5 25 H104.5 V11.8" fill="none" stroke="#8a8a8a" stroke-width="0.7"/>
<g fill="none" stroke="#9a9a9a" stroke-width="0.6"><path d="M28.5 31 V52 Q28.5 63 40 66 M31 31 V52 Q31 61.5 41 63.5 M33.5 31 V52 Q33.5 59.5 42.5 61"/></g>
<path d="M27.5 40 h8 v4.5 h-8z M32 59 l5 -4.5 l3 3.5 l-5 4.5z" fill="#8c8c8c"/>
<g stroke="#19b0a0" stroke-width="1.1" stroke-dasharray="1.6 1.4"><path d="M40 61 H66 M36 64 H67 M36 67.5 H64"/></g>
<path d="M46 62 h6 v6 h-6z" fill="#8c8c8c" opacity="0.7"/>
<path d="M57 12.7 H97.2 V68.5 H67.5 V48.5 H57 V39.5 M57 31 V12.7 M39.5 31 H57 M39.5 31 V39.5 H50" fill="none" stroke="#f2ea19" stroke-width="1.5"/>
<path d="M57.5 48.5 H71.5 V52 H57.5Z" fill="#fff" stroke="#f2ea19" stroke-width="1.2"/>
<path d="M98.6 13 V66 M69 69 H78" stroke="#f59a3c" stroke-width="1.3"/>
<path d="M28.5 30.8 H40" stroke="#e31873" stroke-width="1.3"/>
<circle cx="52.5" cy="17.5" r="2.7" fill="none" stroke="#e31873" stroke-width="1.5"/>
<rect x="58.5" y="39" width="5" height="8" fill="#d81b6c"/><path d="M45.5 38 h5.5 v2.5 h-5.5z" fill="#e31873"/>
<path d="M59 17 h3 M62 36 H69 V43 M71 20 H89 V32 H72" fill="none" stroke="#63b8ea" stroke-width="0.8"/>
<g fill="none" stroke="#19b0a0" stroke-width="1.3"><rect x="63.5" y="21.5" width="5.5" height="9.5"/><path d="M63.5 24.5 h5.5 M63.5 28 h5.5"/><rect x="74" y="21.5" width="5.5" height="9.5"/><path d="M74 24.5 h5.5 M74 28 h5.5"/><rect x="76" y="36" width="4" height="8.5"/><rect x="84.5" y="36" width="4" height="8.5"/><rect x="73.5" y="55" width="4.5" height="9.5"/></g>
<path d="M86.5 15.5 V21.5 H94 V15.5" fill="none" stroke="#7a4a22" stroke-width="1.1"/>
<path d="M93 51 h2.6 v6 h-2.6z M93 59 h2.6 v6.5 h-2.6z M86 53 v11" stroke="#111" stroke-width="1" fill="#111"/>
</svg>
<!-- item 2 -->
<div class="abs" style="left:1525px;top:593.7px;width:13.5px;height:13.5px;background:#8b9099;border-radius:1px"></div>
<svg style="left:1525px;top:593.7px" width="14" height="14"><path d="M3 7.2 L5.8 10 L11 3.8" fill="none" stroke="#fff" stroke-width="2"/></svg>
<span class="t" style="left:1551px;top:590.3px;font:normal 400 14px/20px 'Liberation Sans', sans-serif;color:#f1f3f5;letter-spacing:-0.175px;">AutoCAD-FY25_Fire-Station-Book-Cafe_02-1_...</span>
<span class="t" style="left:1679px;top:623px;font:normal 400 13px/18px 'Liberation Sans', sans-serif;color:#f1f3f5;letter-spacing:-0.324px;">Layout2</span>
<span class="t" style="left:1679px;top:640px;font:normal 400 13px/18px 'Liberation Sans', sans-serif;color:#f1f3f5;letter-spacing:-0.373px;">AutoCAD-FY25_Fire-Station-Bo...</span>
<svg style="left:1536px;top:619.5px" width="127" height="89" viewBox="0 0 127 89"><rect width="127" height="89" fill="#fdfdfd"/><rect x="0.4" y="0.4" width="126.2" height="88.2" fill="none" stroke="#c9ccd0" stroke-width="0.8"/>
<rect x="6.4" y="0.9" width="111.1" height="84.9" fill="none" stroke="#666" stroke-width="0.9"/>
<rect x="8.2" y="2.7" width="109.3" height="83.1" fill="none" stroke="#1a1a1a" stroke-width="0.7" stroke-dasharray="1.8 1.2"/>
<g fill="#a9abae" stroke="#f2ea19" stroke-width="1.2"><path d="M8.2 8.6 H31.8 V12.3 H16.3 V69.9 H39.5 V77.5 H47.2 V69.9 H72.6 V77.5 H79.9 V69.9 H104.4 V74.4 H10.4 V69.9 H12.7 V12.3 H8.2Z"/><path d="M104.4 4.5 H108 V16.8 H104.4Z M104.4 36.8 H108 V49 H104.4Z"/></g>
<path d="M31.8 2.7 V27.7 H16.3 M104.4 2.7 V70 M108 2.7 V74" fill="none" stroke="#f2ea19" stroke-width="1.3"/>
<path d="M47.2 70.5 H72.6 M47.2 74.8 H72.6" stroke="#222" stroke-width="0.9"/>
<path d="M20 71.5 H38 M82 71.5 H103 M106 18 V36 M106 50 V69" stroke="#63b8ea" stroke-width="1.2"/>
<path d="M109 4 H111.8 V14 H109 M109 14 V38 H111.8 V15 M109 45 H111.8 V70 H109 M18 76 H38 V74.5 M81 76 H103" fill="none" stroke="#f59a3c" stroke-width="0.7"/>
<path d="M16.3 27.7 H21.3 V66.2 H16.3 M16.3 47 H21.3" fill="none" stroke="#e2b89a" stroke-width="0.8"/>
<path d="M32 16.5 H37.5 Q37.5 21.5 32 22 M83 18 Q81 24 76.5 25.5" fill="none" stroke="#8cc8ea" stroke-width="0.8"/>
<g fill="none" stroke="#19a8a0" stroke-width="1.4"><rect x="34.4" y="35.2" width="13.8" height="7.8"/><path d="M36.5 37 H46.2 V41 M36.5 37 V41 M41.3 37 v4"/><rect x="35.5" y="45" width="11.8" height="7.5" rx="0.8"/><rect x="34.4" y="54.6" width="13.8" height="7.8"/><path d="M36.5 56 V60.5 H46.2 V56 M41.3 56 v4.5"/></g>
<path d="M73.5 10.9 H104.4 V17.2 H73.5Z M73.5 45 V70 M79.5 45 V63 H95" fill="none" stroke="#ecd0b4" stroke-width="0.9"/>
<rect x="74.2" y="26.5" width="6.8" height="18.2" fill="none" stroke="#333" stroke-width="1.3"/>
<rect x="97" y="18.6" width="6.4" height="15.9" fill="#fff" stroke="#222" stroke-width="1.1"/><path d="M97 24 h6.4 M97 29 h6.4" stroke="#222" stroke-width="0.9"/>
<rect x="95.3" y="48" width="8.6" height="12.3" fill="#141414"/>
<rect x="86" y="65.3" width="8.4" height="3.6" fill="#2a2a2a"/><circle cx="83.6" cy="67" r="1.1" fill="none" stroke="#222" stroke-width="0.7"/>
</svg>
<!-- select folder button -->
<div class="abs" style="left:1779.5px;top:967px;width:95.5px;height:28px;border:1px solid #8e96a2;border-radius:3px"></div>
<span class="t" style="left:1790px;top:971.8px;font:normal 400 13.5px/19px 'Liberation Sans', sans-serif;color:#f4f5f7;letter-spacing:-0.388px;">Select Folder</span>
<!-- ===== command line ===== -->
<div class="abs" style="left:601px;top:1017px;width:59px;height:24px;background:#252c36"></div>
<svg style="left:605.5px;top:1019.5px" width="6" height="18"><g fill="#c9ccd1"><rect x="0.3" y="0.5" width="1.7" height="1.5"/><rect x="3.3" y="0.5" width="1.7" height="1.5"/><rect x="0.3" y="3.2" width="1.7" height="1.5"/><rect x="3.3" y="3.2" width="1.7" height="1.5"/><rect x="0.3" y="5.9" width="1.7" height="1.5"/><rect x="3.3" y="5.9" width="1.7" height="1.5"/><rect x="0.3" y="8.6" width="1.7" height="1.5"/><rect x="3.3" y="8.6" width="1.7" height="1.5"/><rect x="0.3" y="11.3" width="1.7" height="1.5"/><rect x="3.3" y="11.3" width="1.7" height="1.5"/><rect x="0.3" y="14" width="1.7" height="1.5"/><rect x="3.3" y="14" width="1.7" height="1.5"/></g></svg>
<svg style="left:618px;top:1026px" width="10" height="10"><path d="M1 1 L9 9 M9 1 L1 9" stroke="#d7d9dc" stroke-width="1.8"/></svg>
<svg style="left:638px;top:1021px" width="17" height="17" viewBox="0 0 17 17"><path d="M2.2 15 L9.5 7.7" stroke="#d7d9dc" stroke-width="2.6" stroke-linecap="round"/><path d="M15.8 4.2 L13.2 6.6 L10.6 6.2 L10.3 3.6 L12.8 1.2 A4.3 4.3 0 1 0 15.8 4.2Z" fill="#d7d9dc"/></svg>
<div class="abs" style="left:660px;top:1017px;width:682px;height:24.2px;background:rgba(203,204,205,0.94);border-radius:2px 2px 0 0"></div>
<svg style="left:665px;top:1023px" width="14" height="12"><rect x="0.6" y="0.6" width="12.8" height="10.8" fill="none" stroke="#4a4e55" stroke-width="1.2"/><rect x="0.6" y="0.6" width="12.8" height="2.4" fill="#4a4e55"/><path d="M2.5 5 L5 7 L2.5 9 M6 9.3 H9.5" stroke="#4a4e55" stroke-width="1" fill="none"/></svg>
<svg style="left:682px;top:1027.5px" width="8" height="5"><path d="M0.3 0.5 H7.7 L4 4.7Z" fill="#4a4e55"/></svg>
<span class="t" style="left:697px;top:1021px;font:italic 400 11.5px/16px 'Liberation Mono', monospace;color:#63676d;letter-spacing:0.027px;">Type a command</span>
<svg style="left:1330px;top:1026.5px" width="9" height="6"><path d="M0.5 5.5 H8.5 L4.5 0.8Z" fill="#4a4e55"/></svg>

<!-- ===== bottom strip + layout tabs + status bar ===== -->
<div class="abs" style="left:4px;top:1042px;width:1911px;height:5px;background:#3a4352"></div>
<div class="abs" style="left:5px;top:1039px;width:965px;height:3px;background:#353d4a"></div>
<div class="abs" style="left:0;top:1047px;width:1920px;height:33px;background:#222933"></div>
<svg style="left:44px;top:1047px" width="72" height="24"><path d="M11 0 H69.3 L61 23.8 H1.8Z" fill="#3b4453"/></svg>
<svg style="left:20px;top:1052px" width="16" height="14"><path d="M0 1.8 H15.8 M0 7.2 H15.8 M0 12.3 H15.8" stroke="#f4f4f4" stroke-width="2"/></svg>
<span class="t" style="left:62.5px;top:1050.8px;font:normal 700 13px/18px 'Liberation Sans', sans-serif;color:#ffffff;letter-spacing:-0.553px;">Model</span>
<span class="t" style="left:121.2px;top:1050.8px;font:normal 400 13px/18px 'Liberation Sans', sans-serif;color:#f0f2f4;letter-spacing:-0.752px;">Layout1</span>
<span class="t" style="left:187.5px;top:1050.8px;font:normal 400 13px/18px 'Liberation Sans', sans-serif;color:#f0f2f4;letter-spacing:-0.681px;">Layout2</span>
<svg style="left:170px;top:1050px" width="10" height="18"><path d="M7.6 0.8 L2.4 16.8" stroke="#434c5a" stroke-width="1"/></svg>
<svg style="left:236.7px;top:1050px" width="10" height="18"><path d="M7.6 0.8 L2.4 16.8" stroke="#434c5a" stroke-width="1"/></svg>
<svg style="left:278.3px;top:1050px" width="10" height="18"><path d="M7.6 0.8 L2.4 16.8" stroke="#434c5a" stroke-width="1"/></svg>
<svg style="left:255px;top:1052px" width="14" height="14"><path d="M7 0.3 V13.7 M0.3 7 H13.7" stroke="#f4f4f4" stroke-width="2.2"/></svg>
<!-- status groups -->
<div class="abs" style="left:1319px;top:1049px;width:47px;height:24px;background:#2f3744"></div>
<div class="abs" style="left:1369px;top:1049px;width:64px;height:24px;background:#2f3744"></div>
<div class="abs" style="left:1436px;top:1049px;width:104px;height:24px;background:#2f3744"></div>
<div class="abs" style="left:1541.3px;top:1049px;width:63.5px;height:24px;background:#2f3744"></div>
<div class="abs" style="left:1608px;top:1049px;width:106px;height:24px;background:#2f3744"></div>
<div class="abs" style="left:1716.5px;top:1049px;width:39.5px;height:24px;background:#2f3744"></div>
<div class="abs" style="left:1757.5px;top:1049px;width:24.5px;height:24px;background:#2f3744"></div>
<div class="abs" style="left:1784px;top:1049px;width:26px;height:24px;background:#2f3744"></div>
<div class="abs" style="left:1813px;top:1049px;width:49px;height:24px;background:#2f3744"></div>
<div class="abs" style="left:1863.5px;top:1049px;width:24.5px;height:24px;background:#2f3744"></div>
<div class="abs" style="left:1890px;top:1049px;width:25px;height:24px;background:#2f3744"></div>
<div class="abs" style="left:1461px;top:1049px;width:22px;height:24px;background:#5b8dc6"></div>
<div class="abs" style="left:1566px;top:1049px;width:22px;height:24px;background:#5b8dc6"></div>
<div class="abs" style="left:1609px;top:1049px;width:22px;height:24px;background:#5b8dc6"></div>
<div class="abs" style="left:1633px;top:1049px;width:22px;height:24px;background:#5b8dc6"></div>
<span class="t" style="left:1323px;top:1051.8px;font:normal 400 13px/18px 'Liberation Sans', sans-serif;color:#f4f5f6;letter-spacing:-1.247px;">MODEL</span>
<svg style="left:1300px;top:1047px" width="620" height="28" viewBox="1300 1047 620 28">
<g fill="none" stroke="#f2f2f2" stroke-width="1.4">
<path d="M1377.3 1053.7 V1067.8 M1380.8 1053.7 V1067.8 M1384.3 1053.7 V1067.8 M1373 1057 H1388.5 M1373 1060.7 H1388.5 M1373 1064.4 H1388.5" stroke-width="1.3"/>
<path d="M1440.6 1053.5 V1068 H1456 M1440.6 1063.3 H1445.6 V1068" />
<circle cx="1471" cy="1061.5" r="6.2"/><path d="M1471 1061.5 H1481 M1471 1061.5 L1478.5 1053.5" stroke-width="1.2"/>
<path d="M1545.5 1066.3 H1561 M1545.5 1066.3 L1557.5 1054.5"/><rect x="1550.2" y="1058.8" width="3" height="3" fill="#f2f2f2" stroke="none"/>
<rect x="1572" y="1056.5" width="13" height="11.5" stroke-width="1.5"/><rect x="1569" y="1053.6" width="4.6" height="4.6" fill="#5b8dc6" stroke-width="1.2"/>
<path d="M1770 1052.5 V1069.5 M1761.5 1061 H1778.5" stroke-width="2.1"/>
<rect x="1789.3" y="1052.8" width="5.8" height="5.8" stroke-width="1.2"/><circle cx="1803" cy="1060" r="3.2" stroke-width="1.2"/><path d="M1792.5 1069 L1796 1062.8 L1799.5 1069Z" stroke-width="1.1"/>
<rect x="1868.5" y="1054.7" width="15" height="11.8" stroke-width="1.3"/><path d="M1871 1064 L1874.5 1060.5 M1871 1061.3 V1064 H1873.8 M1881 1057.2 L1877.5 1060.7 M1881 1060 V1057.2 H1878.2" stroke-width="1.1"/>
<path d="M1894.3 1054.8 H1910.3 M1894.3 1060.6 H1910.3 M1894.3 1066.4 H1910.3" stroke-width="2.1"/>
</g>
<g fill="#f2f2f2"><rect x="1399" y="1054.6" width="2" height="2"/><rect x="1404.2" y="1054.6" width="2" height="2"/><rect x="1409.4" y="1054.6" width="2" height="2"/><rect x="1399" y="1059.8" width="2" height="2"/><rect x="1404.2" y="1059.8" width="2" height="2"/><rect x="1409.4" y="1059.8" width="2" height="2"/><rect x="1399" y="1065" width="2" height="2"/><rect x="1404.2" y="1065" width="2" height="2"/><rect x="1409.4" y="1065" width="2" height="2"/></g>
<g fill="#d4d6d9"><path d="M1421 1058.8 H1429 L1425 1063.3Z"/><path d="M1488 1058.8 H1496 L1492 1063.3Z"/><path d="M1528 1058.8 H1536 L1532 1063.3Z"/><path d="M1592.6 1058.8 H1600.6 L1596.6 1063.3Z"/><path d="M1702 1058.8 H1710 L1706 1063.3Z"/><path d="M1745 1058.8 H1753 L1749 1063.3Z"/></g>
<path d="M1511.6 1053 V1069" stroke="#39d353" stroke-width="1.3"/><path d="M1505 1054 L1518 1068" stroke="#e8474f" stroke-width="1.2"/><circle cx="1511.6" cy="1061" r="1.5" fill="#2f3744" stroke="#f2f2f2" stroke-width="0.9"/>
<g id="ann" fill="#f2f2f2"><path d="M1619 1053 L1622 1061.5 L1626 1068.5 L1622.3 1066.3 L1620.3 1063.5 L1619 1068 L1617.7 1063.5 L1615.7 1066.3 L1612 1068.5 L1616 1061.5Z"/></g>
<circle cx="1626.3" cy="1055.2" r="2" fill="none" stroke="#f2f2f2" stroke-width="1"/>
<use href="#ann" x="24"/><path d="M1651 1052.5 L1648 1057 H1650.3 L1648.8 1060.5 L1653 1055.8 H1650.6 L1652.5 1052.5Z" fill="#f2f2f2"/>
<use href="#ann" x="49" opacity="0.82"/>
<g transform="translate(1728,1061)"><g fill="#e4e4e4"><circle r="5.2"/><rect x="-1.5" y="-7.4" width="3" height="14.8"/><rect x="-1.5" y="-7.4" width="3" height="14.8" transform="rotate(45)"/><rect x="-1.5" y="-7.4" width="3" height="14.8" transform="rotate(90)"/><rect x="-1.5" y="-7.4" width="3" height="14.8" transform="rotate(135)"/></g><circle r="2.3" fill="#2f3744"/></g>
<path d="M1818.5 1057 H1826.5 L1830.5 1061 V1069.5 H1818.5Z" fill="#f0c23a"/><path d="M1820.5 1052 H1828.5 L1832 1055.5 V1063 H1820.5Z" fill="#3e8ed6"/><path d="M1824 1053 V1061 M1821 1057 H1828" stroke="#f2f2f2" stroke-width="0.9"/><path d="M1826.5 1066 L1829.3 1068.8 L1834 1063.5" fill="none" stroke="#39c267" stroke-width="1.8"/>
<rect x="1846" y="1056.8" width="11.5" height="11.5" fill="none" stroke="#dcdcdc" stroke-width="1.1"/><rect x="1842.2" y="1053" width="12.5" height="10.8" fill="#2f3744" stroke="#58b4ee" stroke-width="1.2"/><path d="M1844.5 1060 C1845.5 1056 1846.5 1056 1847.5 1058.5 S1849 1060 1850 1058.5 S1851.5 1058.3 1852.8 1058.8" fill="none" stroke="#58b4ee" stroke-width="0.9"/>
</svg>
<span class="t" style="left:1684.5px;top:1052.8px;font:normal 700 11.5px/16px 'Liberation Sans', sans-serif;color:#e8eaed;letter-spacing:-0.875px;">1:1</span>
</div></body></html>
